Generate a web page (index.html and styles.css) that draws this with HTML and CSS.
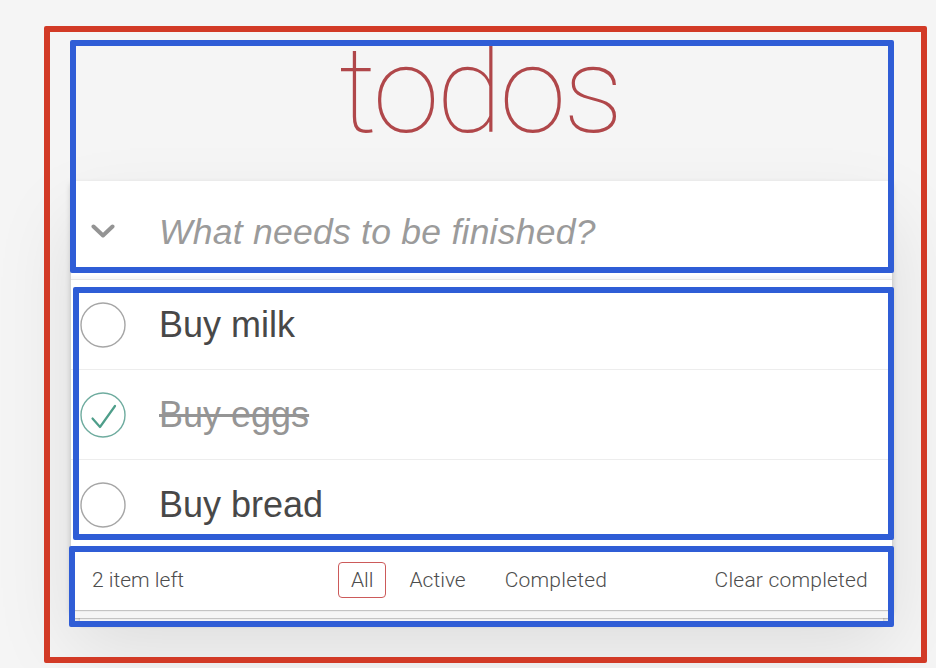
FILE: index.html
```html
<!DOCTYPE html>
<html lang="en">
<head>
<meta charset="utf-8">
<title>todos</title>
<link rel="stylesheet" href="styles.css">
</head>
<body>
<div class="page">
  <div class="app-wrap">
    <h1 class="title">todos</h1>
    <section class="todoapp">
      <div class="new-todo-row">
        <span class="toggle-all">
          <svg width="24" height="16" viewBox="0 0 24 16"><path d="M2.5 2.5 L12 11.5 L21.5 2.5" fill="none" stroke="#949494" stroke-width="4" stroke-linecap="round" stroke-linejoin="round"/></svg>
        </span>
        <span class="new-todo">What needs to be finished?</span>
      </div>
      <ul class="todo-list">
        <li class="todo">
          <span class="check">
            <svg width="46" height="46" viewBox="0 0 46 46"><circle cx="23" cy="23" r="22" fill="none" stroke="#a6a6a6" stroke-width="1.4"/></svg>
          </span>
          <span class="label">Buy milk</span>
        </li>
        <li class="todo done">
          <span class="check">
            <svg width="46" height="46" viewBox="0 0 46 46"><circle cx="23" cy="23" r="22" fill="none" stroke="#6fac9f" stroke-width="1.4"/><path d="M12.5 26.5 L20 35 L35 14" fill="none" stroke="#4e9e8a" stroke-width="2.2" stroke-linecap="round" stroke-linejoin="round"/></svg>
          </span>
          <span class="label">Buy eggs</span>
        </li>
        <li class="todo">
          <span class="check">
            <svg width="46" height="46" viewBox="0 0 46 46"><circle cx="23" cy="23" r="22" fill="none" stroke="#a6a6a6" stroke-width="1.4"/></svg>
          </span>
          <span class="label">Buy bread</span>
        </li>
      </ul>
      <footer class="footer">
        <span class="count">2 item left</span>
        <ul class="filters">
          <li><a class="filter selected">All</a></li>
          <li><a class="filter">Active</a></li>
          <li class="filter-last"><a class="filter">Completed</a></li>
        </ul>
        <span class="clear">Clear completed</span>
      </footer>
    </section>
  </div>

  <div class="mark mark-red"></div>
  <div class="mark mark-blue mark-header"></div>
  <div class="mark mark-blue mark-list"></div>
  <div class="mark mark-blue mark-footer"></div>
</div>
</body>
</html>
```

FILE: styles.css
```css
html, body {
  margin: 0;
  padding: 0;
}
body {
  background: #f5f5f5;
  font-family: "Liberation Sans", Arial, sans-serif;
  color: #484848;
  width: 936px;
  height: 668px;
  overflow: hidden;
}
.page {
  position: relative;
  width: 936px;
  height: 668px;
}
.app-wrap {
  padding-left: 71px;
  width: 821px;
}
.title {
  margin: 0;
  height: 181px;
  box-sizing: border-box;
  padding-top: 30px;
  padding-right: 4px;
  font-family: Roboto, "Liberation Sans", sans-serif;
  font-weight: 100;
  font-size: 121px;
  line-height: 122px;
  color: #b0474a;
  text-align: center;
  letter-spacing: -3px;
}
.todoapp {
  background: #fff;
  box-shadow: 0 3px 6px 0 rgba(0,0,0,0.2), 0 37px 75px 0 rgba(0,0,0,0.1);
}
.new-todo-row {
  height: 98px;
  display: flex;
  align-items: center;
  box-shadow: inset 0 -3px 2px rgba(0,0,0,0.03);
}
.toggle-all {
  width: 89px;
  display: flex;
  align-items: center;
  padding-left: 20px;
  box-sizing: border-box;
  margin-top: 4px;
}
.toggle-all svg {
  display: block;
}
.new-todo {
  font-style: italic;
  font-size: 35.5px;
  letter-spacing: 0.25px;
  color: #9b9b9b;
  margin-top: 4px;
  margin-left: -1px;
}
.todo-list {
  list-style: none;
  margin: 0;
  padding: 0;
  border-top: 1px solid #e6e6e6;
}
.todo {
  height: 89px;
  display: flex;
  align-items: center;
  border-bottom: 1px solid #ededed;
}
.check {
  width: 89px;
  padding-left: 9px;
  box-sizing: border-box;
  display: flex;
  align-items: center;
}
.check svg {
  display: block;
}
.label {
  font-size: 36px;
  color: #484848;
  margin-left: -1px;
}
.done .label {
  color: #959595;
  text-decoration: line-through;
}
.footer {
  height: 60px;
  display: grid;
  grid-template-columns: 1fr auto 1fr;
  align-items: center;
  padding: 0 24px 0 21px;
  font-family: Roboto, "Liberation Sans", sans-serif;
  font-weight: 300;
  font-size: 21px;
  color: #4d4d4d;
  box-shadow: 0 1px 1px rgba(0,0,0,0.2), 0 12px 0 -4px #f6f6f6, 0 13px 1px -4px rgba(0,0,0,0.2), 0 24px 0 -9px #f6f6f6, 0 25px 3px -9px rgba(0,0,0,0.2);
}
.count {
  justify-self: start;
}
.clear {
  justify-self: end;
  letter-spacing: 0.2px;
}
.filters {
  list-style: none;
  margin: 0;
  padding: 0;
  display: flex;
  gap: 10px;
  justify-self: center;
  position: relative;
  left: -1px;
}
.filter-last {
  margin-left: 3px;
}
.filter-last .filter {
  letter-spacing: 0.2px;
}
.filter {
  display: block;
  padding: 5px 12px;
  border: 1.5px solid transparent;
  border-radius: 4px;
}
.filter.selected {
  border-color: #cc5a5a;
}
.mark {
  position: absolute;
  box-sizing: border-box;
  border-radius: 2px;
}
.mark-red {
  left: 44px;
  top: 26px;
  width: 883px;
  height: 637px;
  border: 6px solid #d23a26;
}
.mark-blue {
  border: 6px solid #2f5dd6;
}
.mark-header {
  left: 70px;
  top: 40px;
  width: 824px;
  height: 233px;
}
.mark-list {
  left: 73px;
  top: 287px;
  width: 821px;
  height: 253px;
}
.mark-footer {
  left: 69px;
  top: 546px;
  width: 825px;
  height: 81px;
}
```
